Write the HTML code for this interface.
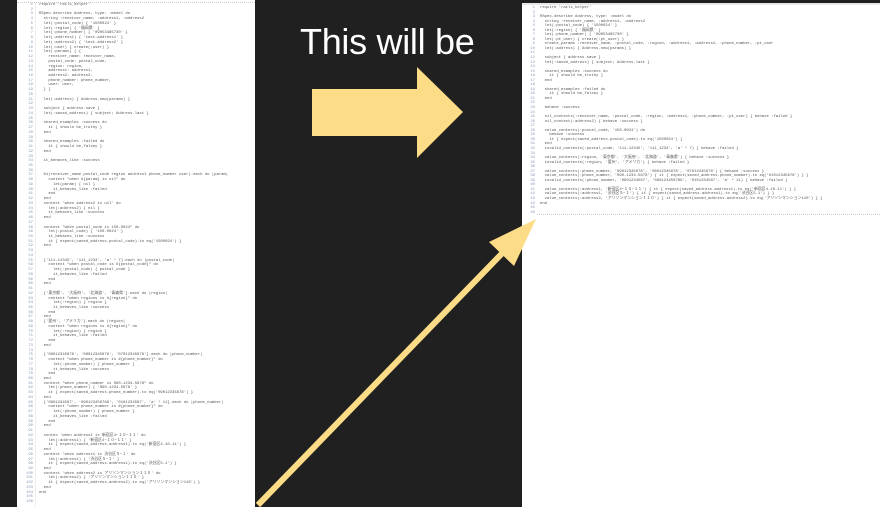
<!DOCTYPE html>
<html><head><meta charset="utf-8"><style>
body{margin:0;width:880px;height:507px;background:#202020;position:relative;overflow:hidden;font-family:"Liberation Sans",sans-serif}
.panel{position:absolute;background:#fff;overflow:hidden}
.code{position:absolute;font-family:"Liberation Mono","Noto Sans CJK JP",monospace;white-space:pre;color:#555;margin:0}
.ln{position:absolute;font-family:"Liberation Mono",monospace;white-space:pre;color:#8a9ab8;text-align:right;margin:0}
</style></head><body>
<div class="panel" style="left:17px;top:0;width:238px;height:507px">
<div style="position:absolute;left:0;top:0;width:238px;height:2px;border-bottom:1px dotted #ccc"></div>
<div style="position:absolute;left:18px;top:3px;width:1px;height:504px;background:#eee"></div>
<pre class="ln" id="l1" style="left:2px;top:3px;width:14px;font-size:3.9px;line-height:4.74px"></pre>
<pre class="code" style="left:22px;top:3px;font-size:3.9px;line-height:4.74px">require 'rails_helper'

RSpec.describe Address, type: :model do
  string :receiver_name, :address1, :address2
  let(:postal_code) { '1500024' }
  let(:region) { '福岡県' }
  let(:phone_number) { '09053485730' }
  let(:address1) { 'test-address1' }
  let(:address2) { 'test-address2' }
  let(:user) { create(:user) }
  let(:params) { {
    receiver_name: receiver_name,
    postal_code: postal_code,
    region: region,
    address1: address1,
    address2: address2,
    phone_number: phone_number,
    user: user,
  } }

  let(:address) { Address.new(params) }

  subject { address.save }
  let(:saved_address) { subject; Address.last }

  shared_examples :success do
    it { should be_truthy }
  end

  shared_examples :failed do
    it { should be_falsey }
  end

  it_behaves_like :success


  %i(receiver_name postal_code region address1 phone_number user).each do |param|
    context "when #{param} is nil" do
      let(param) { nil }
      it_behaves_like :failed
    end
  end
  context 'when address2 is nil' do
    let(:address2) { nil }
    it_behaves_like :success
  end

  context "when postal_code is 150-0024" do
    let(:postal_code) { '150-0024' }
    it_behaves_like :success
    it { expect(saved_address.postal_code).to eq('1500024') }
  end


  ['111-12345', '111_1234', 'a' * 7].each do |postal_code|
    context "when postal_code is #{postal_code}" do
      let(:postal_code) { postal_code }
      it_behaves_like :failed
    end
  end

  ['東京都', '大阪府', '北海道', '青森県'].each do |region|
    context "when regions is #{region}" do
      let(:region) { region }
      it_behaves_like :success
    end
  end
  ['愛州', 'アメリカ'].each do |region|
    context "when regions is #{region}" do
      let(:region) { region }
      it_behaves_like :failed
    end
  end

  ['09012345678', '08012345678', '07012345678'].each do |phone_number|
    context "when phone_number is #{phone_number}" do
      let(:phone_number) { phone_number }
      it_behaves_like :success
    end
  end
  context "when phone_number is 090-1234-5678" do
    let(:phone_number) { '090-1234-5678' }
    it { expect(saved_address.phone_number).to eq('09012345678') }
  end
  ['0901234567', '090123456789', '0101234567', 'a' * 11].each do |phone_number|
    context "when phone_number is #{phone_number}" do
      let(:phone_number) { phone_number }
      it_behaves_like :failed
    end
  end

  contex 'when address1 is 新宿区4−１０−１１' do
    let(:address1) { '新宿区4−１０−１１' }
    it { expect(saved_address.address1).to eq('新宿区4-10-11') }
  end
  context 'when address1 is 渋谷区５−１' do
    let(:address1) { '渋谷区５−１' }
    it { expect(saved_address.address1).to eq('渋谷区5-1') }
  end
  context 'when address2 is アリソンマンション１１０' do
    let(:address2) { 'アリソンマンション１１０' }
    it { expect(saved_address.address2).to eq('アリソンマンション110') }
  end
end
</pre>
</div>

<div class="panel" style="left:522px;top:3px;width:358px;height:504px">
<div style="position:absolute;left:0;top:0;width:358px;height:2px;background:#e8e8e8"></div>
<div style="position:absolute;left:15px;top:211px;width:343px;height:0;border-top:1px dotted #ccc"></div>
<pre class="ln" id="l2" style="left:3px;top:3px;width:10px;font-size:3.9px;line-height:4.55px"></pre>
<pre class="code" style="left:18px;top:3px;font-size:3.9px;line-height:4.55px">require 'rails_helper'

RSpec.describe Address, type: :model do
  string :receiver_name, :address1, :address2
  let(:postal_code) { '1500024' }
  let(:region) { '福岡県' }
  let(:phone_number) { '09053485730' }
  let(:pt_user) { create(:pt_user) }
  create_params :receiver_name, :postal_code, :region, :address1, :address2, :phone_number, :pt_user
  let(:address) { Address.new(params) }

  subject { address.save }
  let(:saved_address) { subject; Address.last }

  shared_examples :success do
    it { should be_truthy }
  end

  shared_examples :failed do
    it { should be_falsey }
  end

  behave :success

  nil_contexts(:receiver_name, :postal_code, :region, :address1, :phone_number, :pt_user) { behave :failed }
  nil_context(:address2) { behave :success }

  value_contexts(:postal_code, '150-0024') do
    behave :success
    it { expect(saved_address.postal_code).to eq('1500024') }
  end
  invalid_contexts(:postal_code, '111-12345', '111_1234', 'a' * 7) { behave :failed }

  value_contexts(:region, '東京都', '大阪府', '北海道', '青森県') { behave :success }
  invalid_contexts(:region, '愛州', 'アメリカ') { behave :failed }

  value_contexts(:phone_number, '09012345678', '08012345678', '07012345678') { behave :success }
  value_contexts(:phone_number, '090-1234-5678') { it { expect(saved_address.phone_number).to eq('01012345678') } }
  invalid_contexts(:phone_number, '0901234567', '090123456789', '0101234567', 'a' * 11) { behave :failed }

  value_contexts(:address1, '新宿区4−１０−１１') { it { expect(saved_address.address1).to eq('新宿区4-10-11') } }
  value_contexts(:address1, '渋谷区５−１') { it { expect(saved_address.address1).to eq('渋谷区5-1') } }
  value_contexts(:address2, 'アリソンマンション１１０') { it { expect(saved_address.address2).to eq('アリソンマンション110') } }
end
</pre>
</div>

<div style="position:absolute;left:300px;top:22px;font-size:36px;color:#fff;line-height:40px;letter-spacing:-0.3px">This will be</div>
<svg style="position:absolute;left:0;top:0;z-index:5" width="880" height="507">
<polygon points="312,89 417,89 417,67 463,112 417,158 417,136 312,136" fill="#fddc87"/>
<line x1="258" y1="505" x2="517" y2="238" stroke="#fddc87" stroke-width="6"/>
<polygon points="536,219 489,242 514,266" fill="#fddc87"/>
</svg>
<script>
function n(id,c){var s='';for(var i=1;i<=c;i++)s+=i+'\n';document.getElementById(id).textContent=s;}
n('l1',106);n('l2',46);
</script>
</body></html>
